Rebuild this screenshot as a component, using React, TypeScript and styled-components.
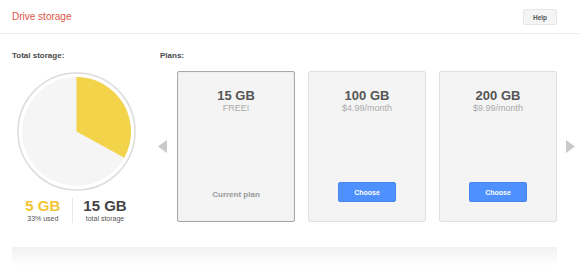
import React from "react";
import styled, { createGlobalStyle } from "styled-components";

const GlobalStyle = createGlobalStyle`
  html, body { margin: 0; padding: 0; background: #fff; }
  body { font-family: "Liberation Sans", Arial, sans-serif; width: 580px; height: 276px; overflow: hidden; }
`;

const Page = styled.div`
  width: 580px;
`;

const Header = styled.header`
  height: 33px;
  border-bottom: 1px solid #ebebeb;
  display: flex;
  align-items: center;
  justify-content: space-between;
  padding: 0 23px 0 12px;
`;

const Title = styled.div`
  font-size: 10px;
  line-height: 12px;
  color: #de5446;
`;

const HelpButton = styled.button`
  width: 34px;
  height: 16px;
  margin-top: 1px;
  padding: 0;
  border: 1px solid #e6e6e6;
  border-radius: 2px;
  background: #f5f5f5;
  color: #555;
  font-family: inherit;
  font-size: 6.5px;
  font-weight: bold;
`;

const Main = styled.main`
  display: flex;
  padding: 17px 0 0 12px;
  gap: 18px;
`;

const Label = styled.div<{ $indent?: number }>`
  font-size: 8px;
  line-height: 10px;
  font-weight: bold;
  color: #4a4a4a;
  padding-left: ${(p) => p.$indent ?? 0}px;
`;

const LeftColumn = styled.section`
  width: 128px;
  display: flex;
  flex-direction: column;
`;

const ChartWrap = styled.div`
  margin-top: 11px;
  display: flex;
  justify-content: center;
`;

const Stats = styled.div`
  margin-top: 7px;
  display: flex;
  justify-content: center;
`;

const Stat = styled.div<{ $first?: boolean }>`
  display: flex;
  flex-direction: column;
  align-items: center;
  padding: ${(p) => (p.$first ? "0 12px 0 0" : "0 0 0 10px")};
  border-left: ${(p) => (p.$first ? "none" : "1px solid #e8e8e8")};
`;

const StatValue = styled.div<{ $color: string }>`
  font-size: 15px;
  line-height: 16px;
  font-weight: bold;
  color: ${(p) => p.$color};
`;

const StatCaption = styled.div`
  font-size: 7px;
  line-height: 9px;
  color: #555;
`;

const PlansColumn = styled.section`
  display: flex;
  flex-direction: column;
`;

const Carousel = styled.div`
  margin-top: 10px;
  display: flex;
  align-items: center;
`;

const Cards = styled.div`
  display: flex;
  gap: 13px;
  margin: 0 9px 0 10px;
`;

const Card = styled.div<{ $current?: boolean }>`
  box-sizing: border-box;
  width: 118px;
  height: 151px;
  border: 1px solid ${(p) => (p.$current ? "#a8a8a8" : "#e0e0e0")};
  border-radius: 2px;
  background: #f4f4f4;
  box-shadow: ${(p) => (p.$current ? "inset 0 0 2px rgba(0,0,0,0.08)" : "none")};
  display: flex;
  flex-direction: column;
  align-items: center;
  padding: 18px 0 19px;
`;

const Size = styled.div`
  font-size: 13px;
  line-height: 12px;
  font-weight: bold;
  color: #555;
`;

const Price = styled.div`
  margin-top: 1px;
  font-size: 9px;
  line-height: 10px;
  color: #aaa;
`;

const CardFooter = styled.div`
  margin-top: auto;
  height: 20px;
  display: flex;
  align-items: center;
  justify-content: center;
`;

const CurrentLabel = styled.div`
  padding-top: 5px;
  font-size: 8px;
  font-weight: bold;
  color: #999;
`;

const ChooseButton = styled.button`
  width: 58px;
  height: 20px;
  padding: 0;
  border: 1px solid #4787ed;
  border-radius: 2px;
  background: #4d90fe;
  color: #fff;
  font-family: inherit;
  font-size: 7px;
  font-weight: bold;
`;

const BottomBar = styled.div`
  margin: 24px 23px 0 12px;
  height: 18px;
  background: linear-gradient(to bottom, #f2f2f2, #f9f9f9 60%, #fefefe);
`;

const Arrow = ({ dir }: { dir: "left" | "right" }) => (
  <svg width="9" height="13" viewBox="0 0 9 13">
    <polygon
      points={dir === "left" ? "9,0 9,13 0,6.5" : "0,0 0,13 9,6.5"}
      fill="#c9c9c9"
    />
  </svg>
);

const PieChart = ({ percent }: { percent: number }) => {
  const c = 59.5;
  const r = 54.5;
  const a = (percent / 100) * Math.PI * 2;
  const x = c + r * Math.sin(a);
  const y = c - r * Math.cos(a);
  const large = percent > 50 ? 1 : 0;
  return (
    <svg width="119" height="119" viewBox="0 0 119 119">
      <circle cx={c} cy={c} r={58.5} fill="#fff" stroke="#dcdcdc" strokeWidth="1.5" />
      <circle cx={c} cy={c} r={r} fill="#f5f5f5" />
      <path
        d={`M${c} ${c} L${c} ${c - r} A${r} ${r} 0 ${large} 1 ${x.toFixed(2)} ${y.toFixed(2)} Z`}
        fill="#f3d34a"
      />
    </svg>
  );
};

const plans = [
  { size: "15 GB", price: "FREE!", current: true },
  { size: "100 GB", price: "$4.99/month" },
  { size: "200 GB", price: "$9.99/month" },
];

export default function App() {
  return (
    <Page>
      <GlobalStyle />
      <Header>
        <Title>Drive storage</Title>
        <HelpButton>Help</HelpButton>
      </Header>
      <Main>
        <LeftColumn>
          <Label>Total storage:</Label>
          <ChartWrap>
            <PieChart percent={33} />
          </ChartWrap>
          <Stats>
            <Stat $first>
              <StatValue $color="#f3c530">5 GB</StatValue>
              <StatCaption>33% used</StatCaption>
            </Stat>
            <Stat>
              <StatValue $color="#444">15 GB</StatValue>
              <StatCaption>total storage</StatCaption>
            </Stat>
          </Stats>
        </LeftColumn>
        <PlansColumn>
          <Label $indent={2}>Plans:</Label>
          <Carousel>
            <Arrow dir="left" />
            <Cards>
              {plans.map((p) => (
                <Card key={p.size} $current={p.current}>
                  <Size>{p.size}</Size>
                  <Price>{p.price}</Price>
                  <CardFooter>
                    {p.current ? (
                      <CurrentLabel>Current plan</CurrentLabel>
                    ) : (
                      <ChooseButton>Choose</ChooseButton>
                    )}
                  </CardFooter>
                </Card>
              ))}
            </Cards>
            <Arrow dir="right" />
          </Carousel>
        </PlansColumn>
      </Main>
      <BottomBar />
    </Page>
  );
}
